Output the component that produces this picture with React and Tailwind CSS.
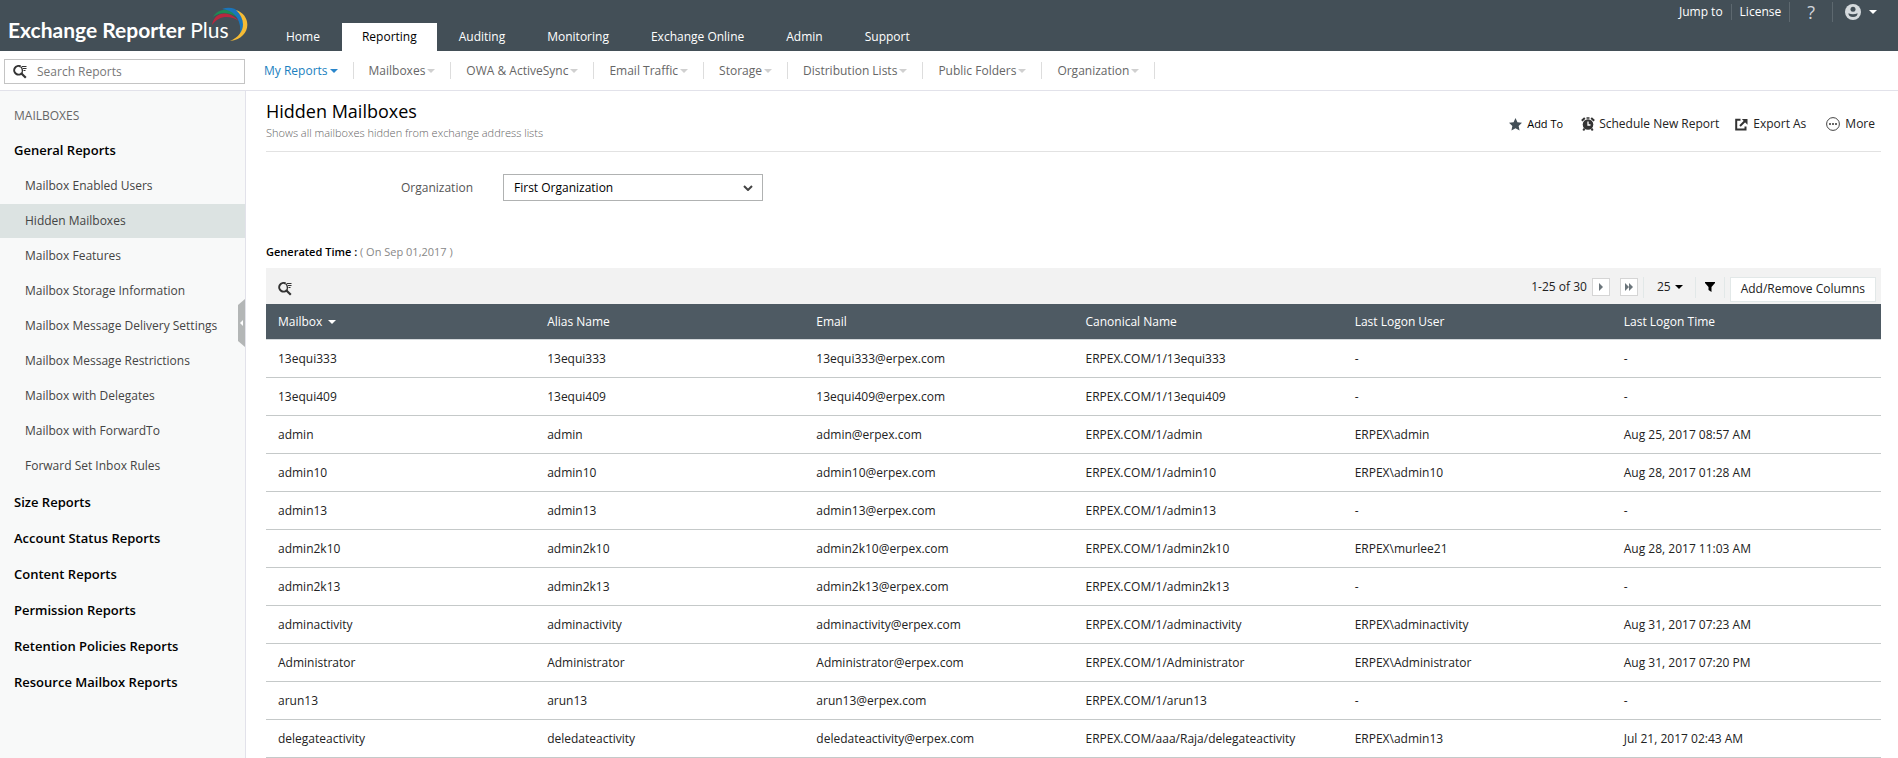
import React, { useState } from 'react';

const tabs = ['Home', 'Reporting', 'Auditing', 'Monitoring', 'Exchange Online', 'Admin', 'Support'];

const categories = [
  'My Reports',
  'Mailboxes',
  'OWA & ActiveSync',
  'Email Traffic',
  'Storage',
  'Distribution Lists',
  'Public Folders',
  'Organization',
];

const generalReports = [
  'Mailbox Enabled Users',
  'Hidden Mailboxes',
  'Mailbox Features',
  'Mailbox Storage Information',
  'Mailbox Message Delivery Settings',
  'Mailbox Message Restrictions',
  'Mailbox with Delegates',
  'Mailbox with ForwardTo',
  'Forward Set Inbox Rules',
];

const reportGroups = [
  'Size Reports',
  'Account Status Reports',
  'Content Reports',
  'Permission Reports',
  'Retention Policies Reports',
  'Resource Mailbox Reports',
];

const columns = ['Mailbox', 'Alias Name', 'Email', 'Canonical Name', 'Last Logon User', 'Last Logon Time'];

const rows = [
  ['13equi333', '13equi333', '13equi333@erpex.com', 'ERPEX.COM/1/13equi333', '-', '-'],
  ['13equi409', '13equi409', '13equi409@erpex.com', 'ERPEX.COM/1/13equi409', '-', '-'],
  ['admin', 'admin', 'admin@erpex.com', 'ERPEX.COM/1/admin', 'ERPEX\\admin', 'Aug 25, 2017 08:57 AM'],
  ['admin10', 'admin10', 'admin10@erpex.com', 'ERPEX.COM/1/admin10', 'ERPEX\\admin10', 'Aug 28, 2017 01:28 AM'],
  ['admin13', 'admin13', 'admin13@erpex.com', 'ERPEX.COM/1/admin13', '-', '-'],
  ['admin2k10', 'admin2k10', 'admin2k10@erpex.com', 'ERPEX.COM/1/admin2k10', 'ERPEX\\murlee21', 'Aug 28, 2017 11:03 AM'],
  ['admin2k13', 'admin2k13', 'admin2k13@erpex.com', 'ERPEX.COM/1/admin2k13', '-', '-'],
  ['adminactivity', 'adminactivity', 'adminactivity@erpex.com', 'ERPEX.COM/1/adminactivity', 'ERPEX\\adminactivity', 'Aug 31, 2017 07:23 AM'],
  ['Administrator', 'Administrator', 'Administrator@erpex.com', 'ERPEX.COM/1/Administrator', 'ERPEX\\Administrator', 'Aug 31, 2017 07:20 PM'],
  ['arun13', 'arun13', 'arun13@erpex.com', 'ERPEX.COM/1/arun13', '-', '-'],
  ['delegateactivity', 'deledateactivity', 'deledateactivity@erpex.com', 'ERPEX.COM/aaa/Raja/delegateactivity', 'ERPEX\\admin13', 'Jul 21, 2017 02:43 AM'],
];

function Caret({ className }) {
  return (
    <svg viewBox="0 0 8 4" className={`w-2 h-1 shrink-0 ${className || ''}`} fill="currentColor" aria-hidden="true">
      <path d="M0 0h8L4 4z" />
    </svg>
  );
}

function SearchIcon() {
  return (
    <svg viewBox="0 0 14 14" className="w-3.5 h-3.5 shrink-0 text-[#333]" fill="none" stroke="currentColor" aria-hidden="true">
      <path d="M7.6 1.5A4.3 4.3 0 1 0 9 7.8" strokeWidth="2" />
      <path d="M7.6 1.5Q9.4 3 9.4 5.4T8.6 8" strokeWidth="1.4" />
      <path d="M8.2 8.2L12.8 12.8" strokeWidth="2.2" />
      <path d="M9 1.5h4.5M10 3.5h3.5M10.5 5.5h2" strokeWidth="1" />
    </svg>
  );
}

function Logo() {
  return (
    <a href="#home" className="relative block w-[250px] shrink-0 pl-2 pt-[15px] font-[Lato,sans-serif] text-[21px] leading-[30px] text-white whitespace-nowrap">
      <span className="font-bold">Exchange Reporter</span> Plus
      <svg viewBox="0 0 40 36" className="absolute left-[210px] top-[7px] w-10 h-9" aria-hidden="true">
        <path d="M2 18C4 5 18 2 29 14C20 8 9 8 2 18Z" fill="#b8283f" />
        <path d="M3 10C9 0 23 0 29 12C21 5 11 4 3 10Z" fill="#1f8a55" />
        <path d="M12 2C25-3 37 7 32 24L30 27C32 13 24 3 12 2Z" fill="#1a75bb" />
        <path d="M26 3C42 8 42 31 20 34C35 28 37 13 26 3Z" fill="#f5bb35" />
      </svg>
    </a>
  );
}

function Header() {
  return (
    <header className="flex h-[51px] bg-[#434f57] text-white">
      <Logo />
      <nav className="flex flex-1 items-end gap-0.5 pl-4">
        {tabs.map(tab => (
          <a
            key={tab}
            href="#tab"
            className={`h-7 px-5 leading-7 ${tab === 'Reporting' ? 'bg-white text-black' : 'font-medium'}`}
          >
            {tab}
          </a>
        ))}
      </nav>
      <div className="flex h-5 mt-0.5 mr-[21px] items-center">
        <a href="#jump" className="pr-2">Jump to</a>
        <a href="#license" className="border-l border-[#5d686f] px-2">License</a>
        <button className="border-l border-[#5d686f] px-[17px] h-5 text-lg leading-5 text-gray-300" aria-label="Help">?</button>
        <button className="flex items-center gap-2 border-l border-[#5d686f] pl-3 h-5" aria-label="Account">
          <svg viewBox="0 0 16 16" className="w-4 h-4" aria-hidden="true">
            <circle cx="8" cy="8" r="8" fill="#d5dadd" />
            <circle cx="8" cy="5.2" r="2.5" fill="#434f57" />
            <path d="M3.4 9.3Q8 11 12.6 9.3Q12.6 13 8 13T3.4 9.3Z" fill="#434f57" />
          </svg>
          <Caret />
        </button>
      </div>
    </header>
  );
}

function SubNav() {
  return (
    <div className="flex h-10 border-b border-[#e2e2ea]">
      <div className="w-[249px] shrink-0 pl-1 pt-2">
        <label className="flex h-[25px] w-[241px] items-center gap-2.5 border border-[#c4c4c4] pl-2">
          <SearchIcon />
          <input type="text" placeholder="Search Reports" aria-label="Search Reports" className="min-w-0 flex-1 outline-none placeholder:text-[#777]" />
        </label>
      </div>
      <nav className="flex pt-[11px]">
        {categories.map((name, i) => (
          <a
            key={name}
            href="#category"
            className={`flex h-[17px] items-center gap-0.5 border-r border-[#ddd] px-[15px] ${i === 0 ? 'text-[#1b7fc0]' : 'text-[#666]'}`}
          >
            {name}
            <Caret className={i === 0 ? 'text-[#2a86cb]' : 'text-[#d0d0d0]'} />
          </a>
        ))}
      </nav>
    </div>
  );
}

function Sidebar() {
  return (
    <aside className="relative w-[246px] shrink-0 border-r border-[#e2e2ea] bg-[#f8f9f9] pt-[7px]">
      <h2 className="pl-3.5 leading-[35px] text-[#666]">MAILBOXES</h2>
      <h3 className="pl-3.5 pb-0.5 text-[13px] leading-[34px] font-semibold text-black">General Reports</h3>
      <ul>
        {generalReports.map(name => (
          <li key={name} className="pb-px">
            <a
              href="#report"
              className={`block pl-[25px] leading-[34px] text-[#444] ${name === 'Hidden Mailboxes' ? 'bg-[#dce3e2]' : ''}`}
            >
              {name}
            </a>
          </li>
        ))}
      </ul>
      <ul>
        {reportGroups.map(name => (
          <li key={name}>
            <a href="#group" className="block pl-3.5 text-[13px] leading-9 font-semibold text-black">{name}</a>
          </li>
        ))}
      </ul>
      {/* collapse handle */}
      <button className="absolute right-0 top-[208px] w-[7px] h-12" aria-label="Collapse sidebar">
        <svg viewBox="0 0 7 48" className="w-full h-full" aria-hidden="true">
          <path d="M7 0L0 6v36l7 6z" fill="#b3b6b6" />
          <path d="M5 21v6L2 24z" fill="#fff" />
        </svg>
      </button>
    </aside>
  );
}

function Actions() {
  return (
    <div className="flex items-center pt-1.5 pr-1.5 text-[#222]">
      <button className="flex items-center gap-[5px] mr-[18px] text-[11px] text-black font-medium">
        <svg viewBox="0 0 24 24" className="w-[13px] h-[13px]" fill="#434f57" aria-hidden="true">
          <path d="M12 0l3.600 8 8.400.9-6.200 5.800 1.700 8.600L12 19l-7.500 4.300 1.700-8.600L0 8.900 8.400 8z" />
        </svg>
        Add To
      </button>
      <button className="flex items-center gap-1 mr-4">
        <svg viewBox="0 0 14 14" className="w-3.5 h-3.5" aria-hidden="true">
          <circle cx="7" cy="7.500" r="5.300" fill="#333" />
          <path d="M.8 3.800L3.800 1M13.200 3.800L10.200 1M3.500 11.500L2.300 13.500M10.500 11.500L11.700 13.500" stroke="#333" strokeWidth="2" />
          <path d="M5.500 1h3" stroke="#333" strokeWidth="1.500" />
          <path d="M7 4.500V8h2.500" stroke="#fff" strokeWidth="1.300" fill="none" />
        </svg>
        Schedule New Report
      </button>
      <button className="flex items-center gap-[5px] mr-5">
        <svg viewBox="0 0 13 13" className="w-[13px] h-[13px]" fill="none" stroke="#333" aria-hidden="true">
          <path d="M5.500 1.800H1.200v9.800h9.300V8.500" strokeWidth="2" />
          <path d="M5 8L10 3" strokeWidth="2" />
          <path d="M6.800 1H12.500V6.700z" fill="#333" stroke="none" />
        </svg>
        Export As
      </button>
      <button className="flex items-center gap-[5px]">
        <svg viewBox="0 0 14 14" className="w-3.5 h-3.5" aria-hidden="true">
          <circle cx="7" cy="7" r="6.400" fill="none" stroke="#444" />
          <circle cx="4" cy="7" r="1" fill="#333" />
          <circle cx="7" cy="7" r="1" fill="#333" />
          <circle cx="10" cy="7" r="1" fill="#333" />
        </svg>
        More
      </button>
    </div>
  );
}

function Toolbar() {
  return (
    <div className="flex h-9 items-center bg-[#f2f2f2] pl-3 pr-[5px] pt-0.5 text-[#222]">
      <button aria-label="Search in report" className="mt-1">
        <SearchIcon />
      </button>
      <div className="ml-auto flex items-center">
        <span>1-25 of 30</span>
        <button className="ml-[5px] flex h-[18px] w-[18px] items-center justify-center border border-[#d5d5d5] bg-white" aria-label="Next page">
          <svg viewBox="0 0 4 8" className="h-2 w-1" fill="#6b757b"><path d="M0 0l4 4-4 4z" /></svg>
        </button>
        <button className="ml-2.5 flex h-[18px] w-[18px] items-center justify-center border border-[#d5d5d5] bg-white" aria-label="Last page">
          <svg viewBox="0 0 8 8" className="h-2 w-2" fill="#6b757b"><path d="M0 0l4 4-4 4zM4 0l4 4-4 4z" /></svg>
        </button>
        <button className="ml-[5px] flex h-[21px] items-center gap-1 border-l border-[#e2e8e8] pl-[13px] pr-3" aria-label="Rows per page">
          25
          <Caret className="text-black" />
        </button>
        <button className="flex h-[21px] w-[30px] items-center justify-center border-x border-[#e2e8e8]" aria-label="Filter">
          <svg viewBox="0 0 10 10" className="h-2.5 w-2.5" fill="#000"><path d="M0 0h10v1L6.500 5v5L3.500 8V5L0 1z" /></svg>
        </button>
        <button className="ml-[5px] mt-1 h-[25px] border border-[#e2e8e8] bg-white px-2.5">Add/Remove Columns</button>
      </div>
    </div>
  );
}

export default function App() {
  const [organization, setOrganization] = useState('First Organization');

  return (
    <div className="flex min-h-screen flex-col bg-white font-['Open_Sans',sans-serif] text-xs text-[#222]">
      <Header />
      <SubNav />
      <div className="flex flex-1">
        <Sidebar />
        <main className="min-w-0 flex-1 pl-5 pr-[17px]">
          <div className="flex h-[61px] items-center justify-between border-b border-[#e2e2e2]">
            <div>
              <h1 className="text-lg leading-6 text-black">Hidden Mailboxes</h1>
              <p className="text-[11px] leading-5 font-light text-[#666]">Shows all mailboxes hidden from exchange address lists</p>
            </div>
            <Actions />
          </div>

          <div className="flex items-center pt-[22px]">
            <label htmlFor="organization" className="w-[207px] text-right text-[#555]">Organization</label>
            <div className="relative ml-[30px]">
              <select
                id="organization"
                value={organization}
                onChange={e => setOrganization(e.target.value)}
                className="block h-[27px] w-[260px] appearance-none border border-[#b0b2b2] bg-white pl-2.5 text-black"
              >
                <option>First Organization</option>
              </select>
              <svg viewBox="0 0 10 6" className="pointer-events-none absolute right-2.5 top-[11px] w-2.5 h-1.5" fill="none" stroke="#444" strokeWidth="2" aria-hidden="true">
                <path d="M1 1l4 4 4-4" />
              </svg>
            </div>
          </div>

          <p className="pt-[43px] pb-2 text-[11px] leading-4 text-[#888]">
            <span className="font-semibold text-black">Generated Time :</span> ( On Sep 01,2017 )
          </p>

          <Toolbar />
          <table className="w-full table-fixed text-left">
            <thead>
              <tr className="h-[35px] border-b border-[#d5d9dc] bg-[#4e5a63] text-white">
                {columns.map((name, i) => (
                  <th key={name} className="pl-3 pt-0.5 font-medium">
                    {i === 0 ? <button className="flex items-center gap-1.5">{name} <Caret /></button> : name}
                  </th>
                ))}
              </tr>
            </thead>
            <tbody>
              {rows.map(row => (
                <tr key={row[0]} className="h-[38px] border-b border-[#c5c9c9]">
                  {row.map((cell, i) => (
                    <td key={columns[i]} className="pl-3 pt-0.5">{cell}</td>
                  ))}
                </tr>
              ))}
            </tbody>
          </table>
        </main>
      </div>
    </div>
  );
}
